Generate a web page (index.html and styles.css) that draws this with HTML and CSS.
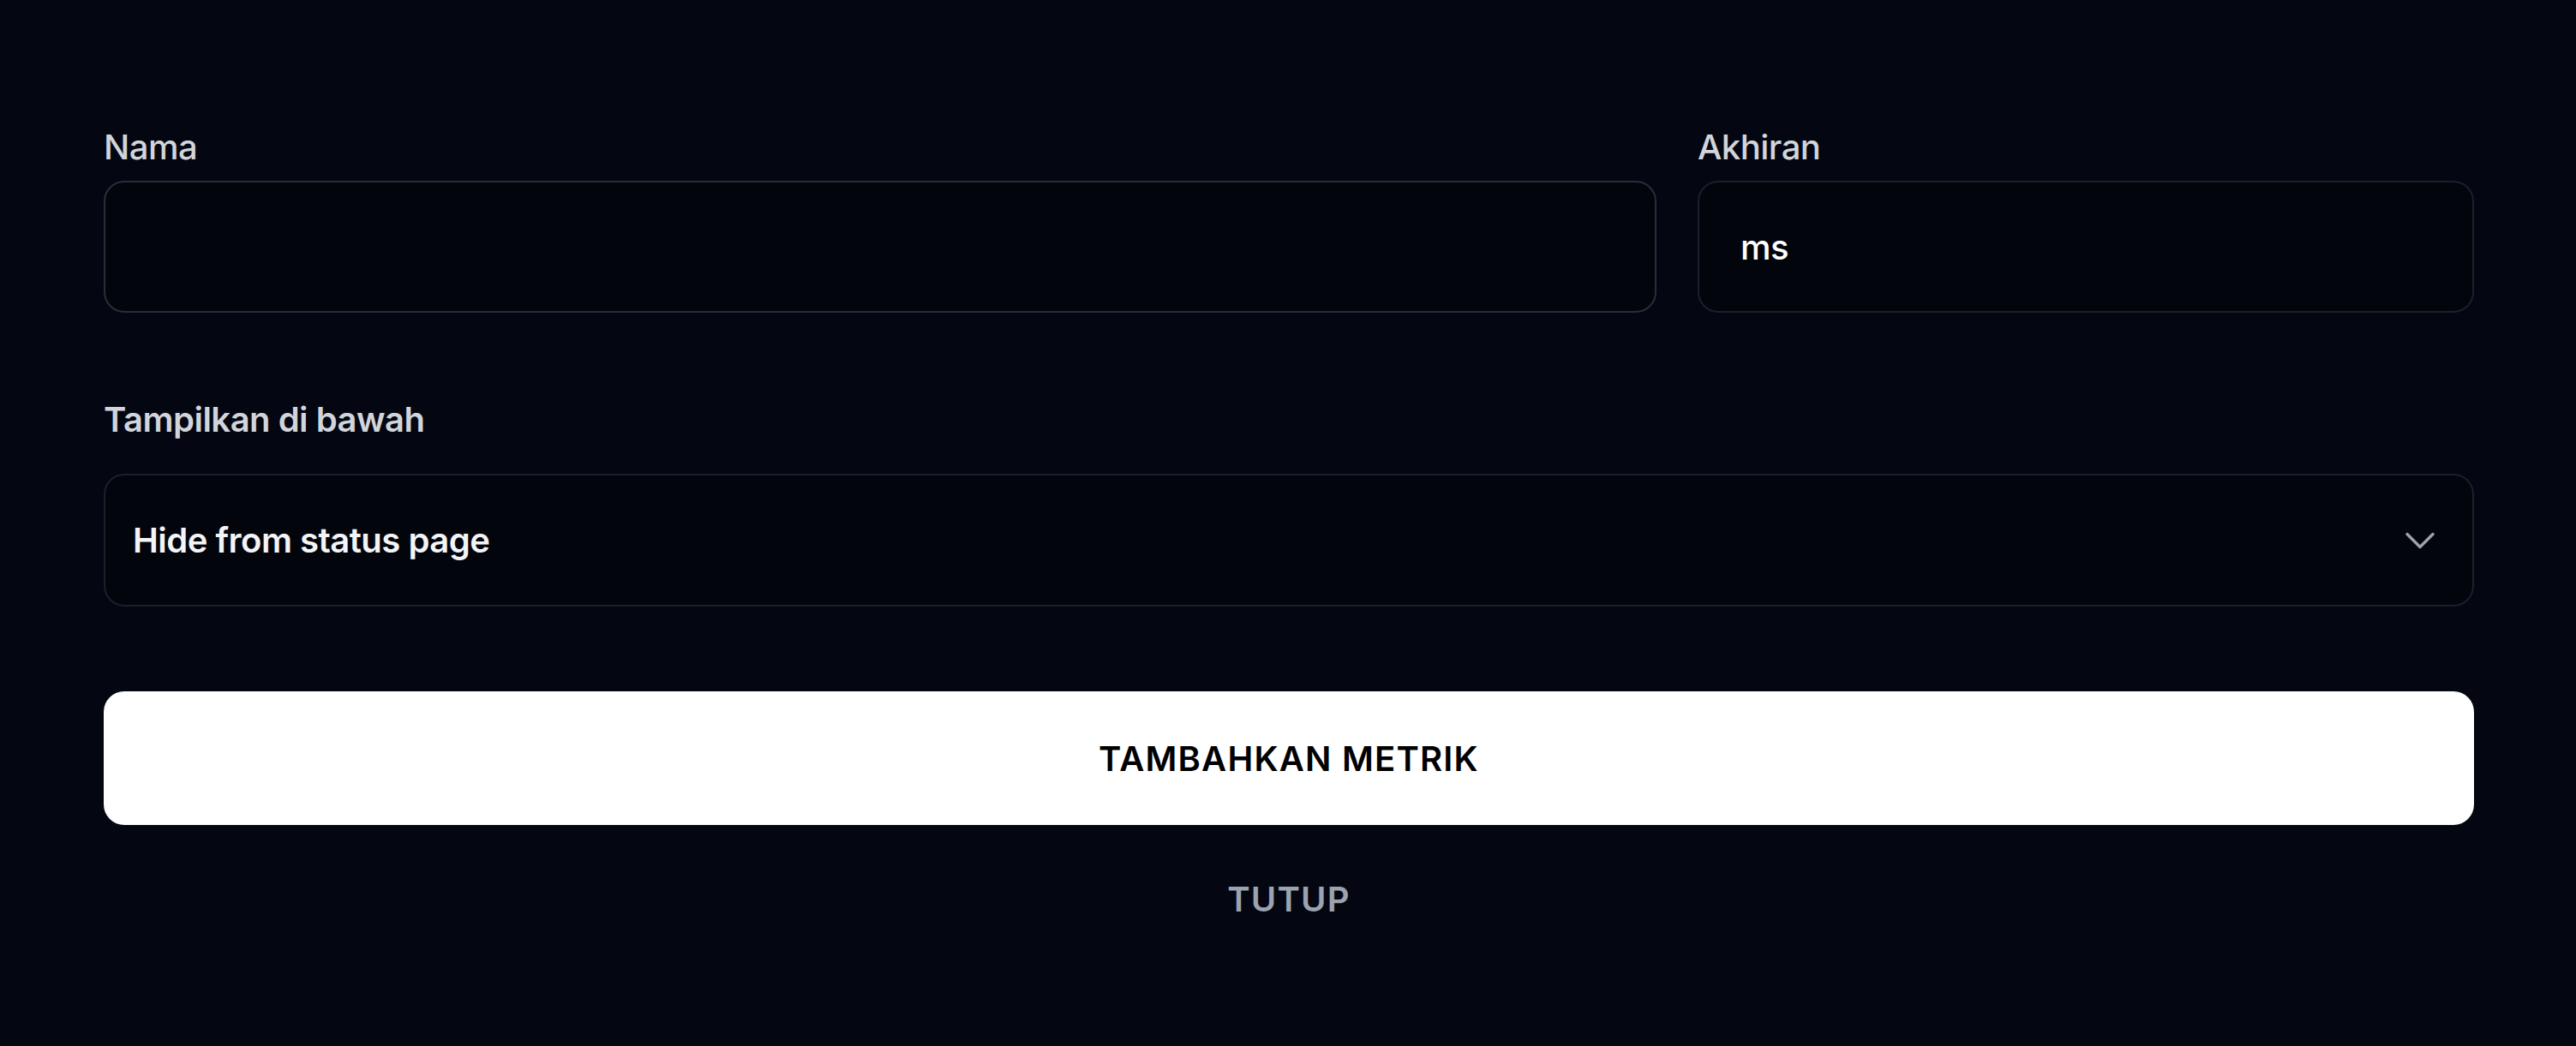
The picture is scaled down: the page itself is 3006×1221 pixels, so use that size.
FILE: index.html
```html
<!DOCTYPE html>
<html lang="id">
<head>
<meta charset="utf-8">
<title>Tambahkan Metrik</title>
<link rel="stylesheet" href="styles.css">
</head>
<body>
  <form class="form">
    <div class="row">
      <div class="field">
        <label class="label" for="nama">Nama</label>
        <input class="input input-focus" id="nama" type="text" value="">
      </div>
      <div class="field">
        <label class="label" for="akhiran">Akhiran</label>
        <input class="input input-suffix" id="akhiran" type="text" value="ms">
      </div>
    </div>
    <div class="field field-select">
      <label class="label label-strong">Tampilkan di bawah</label>
      <div class="select">
        <span class="select-value">Hide from status page</span>
        <svg class="chevron" viewBox="0 0 24 24" fill="none" stroke="currentColor" stroke-width="1.7" stroke-linecap="round" stroke-linejoin="round"><path d="m19.5 8.25-7.5 7.5-7.5-7.5"/></svg>
      </div>
    </div>
    <button type="button" class="btn-primary">TAMBAHKAN METRIK</button>
    <button type="button" class="btn-link">TUTUP</button>
  </form>
</body>
</html>
```
FILE: styles.css
```css
* { box-sizing: border-box; }
html, body {
  margin: 0;
  background: #040711;
  font-family: Inter, "Noto Sans", sans-serif;
}
body {
  width: 3006px;
  height: 1221px;
  overflow: hidden;
}
.form {
  display: flex;
  flex-direction: column;
  padding: 148px 119px 0 121px;
  letter-spacing: -0.5px;
}
.row {
  display: grid;
  grid-template-columns: 2fr 1fr;
  column-gap: 48px;
}
.field {
  display: flex;
  flex-direction: column;
}
.label {
  font-size: 40px;
  line-height: 48px;
  font-weight: 500;
  color: #d1d5db;
  margin-bottom: 15px;
}
.label-strong {
  font-weight: 600;
  margin-bottom: 39px;
}
.input {
  height: 154px;
  width: 100%;
  background: #03050d;
  border: 2px solid #1a202c;
  border-radius: 24px;
  padding: 0 48px;
  font-family: inherit;
  font-size: 40px;
  font-weight: 500;
  letter-spacing: -0.5px;
  color: #ffffff;
  outline: none;
}
.input-focus { border-color: #262e3b; }
.field-select { margin-top: 101px; }
.select {
  height: 155px;
  display: flex;
  align-items: center;
  justify-content: space-between;
  background: #03050d;
  border: 2px solid #1a202c;
  border-radius: 24px;
  padding: 0 37px 0 32px;
}
.select-value {
  font-size: 40px;
  font-weight: 600;
  color: #f3f4f6;
}
.chevron {
  width: 48px;
  height: 48px;
  color: #9ca3af;
}
.btn-primary {
  margin-top: 99px;
  height: 156px;
  width: 100%;
  border: none;
  border-radius: 24px;
  background: #ffffff;
  color: #000000;
  font-family: inherit;
  font-size: 40px;
  font-weight: 600;
  letter-spacing: 1.2px;
  cursor: pointer;
}
.btn-link {
  margin-top: 63px;
  align-self: center;
  background: none;
  border: none;
  padding: 0;
  font-family: inherit;
  font-size: 40px;
  line-height: 48px;
  font-weight: 600;
  letter-spacing: 1.2px;
  color: #9ca3af;
  cursor: pointer;
}
```
